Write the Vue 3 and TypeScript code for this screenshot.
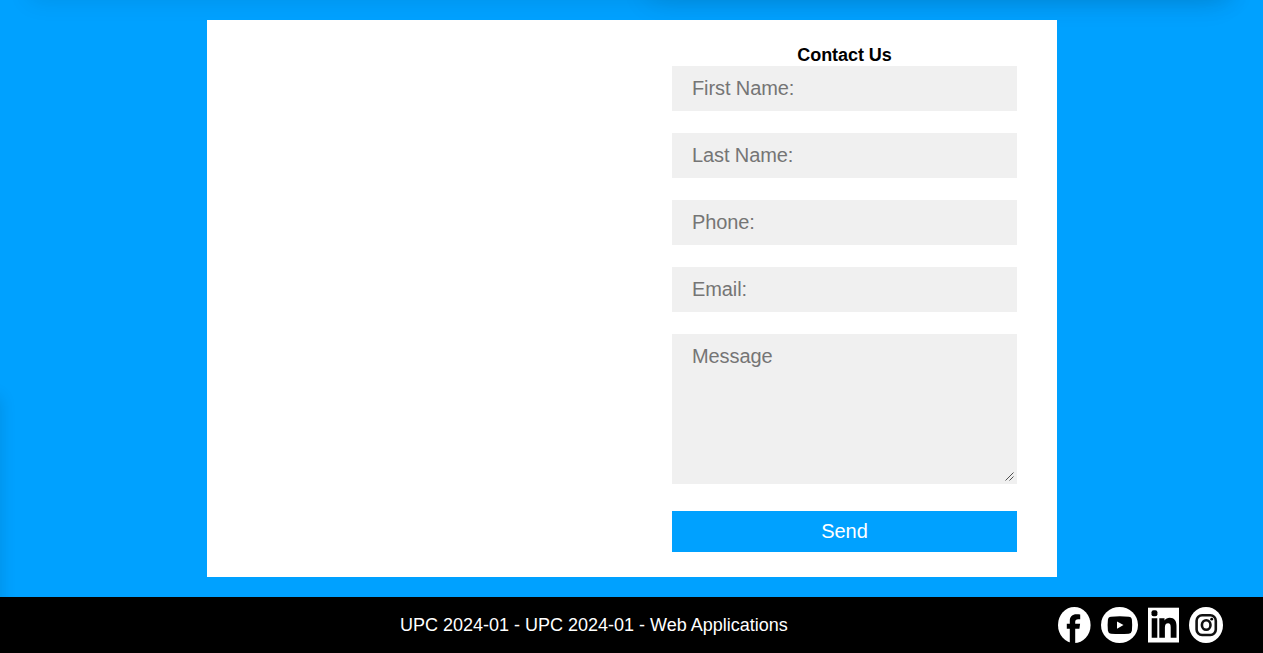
<script setup lang="ts">
interface Field {
  name: string
  label: string
  type: string
}

const fields: Field[] = [
  { name: 'firstName', label: 'First Name:', type: 'text' },
  { name: 'lastName', label: 'Last Name:', type: 'text' },
  { name: 'phone', label: 'Phone:', type: 'tel' },
  { name: 'email', label: 'Email:', type: 'email' },
]
</script>

<template>
  <div class="page">
    <main class="contact">
      <div class="shade shade-top"></div>
      <div class="shade shade-right"></div>
      <div class="shade shade-left"></div>
      <section class="card">
        <form class="form" @submit.prevent>
          <h2>Contact Us</h2>
          <input v-for="f in fields" :key="f.name" :name="f.name" :type="f.type" :placeholder="f.label" />
          <div class="message">
            <textarea name="message" placeholder="Message"></textarea>
            <svg class="grip" width="9" height="9" viewBox="0 0 9 9">
              <path d="M0.500 8.500l8-8M4.500 8.500l4-4" fill="none" stroke="#505050" />
            </svg>
          </div>
          <button type="submit">Send</button>
        </form>
      </section>
    </main>
    <footer>
      <p>UPC 2024-01 - UPC 2024-01 - Web Applications</p>
      <nav class="social">
        <a aria-label="Facebook">
          <svg width="33" height="36" viewBox="0 0 33 36">
            <ellipse cx="16.300" cy="18" rx="16.300" ry="18" fill="#fff" />
            <path d="M11.800 36V21.800H8.800v-5h3v-2.600c0-4.700 2.600-6.900 6.600-6.900 1.500 0 2.800.1 3.800.3v4.600h-2.100c-2 0-2.900.9-2.900 2.500v2.100h4.900l-.7 5h-4.200V36z" />
          </svg>
        </a>
        <a aria-label="YouTube">
          <svg width="37" height="36" viewBox="0 0 37 36">
            <ellipse cx="18.500" cy="18" rx="18.500" ry="18" fill="#fff" />
            <path d="M10 9.700q8.700-.7 17.800 0 2.700.2 3.100 3 .6 5.500 0 11-.4 2.700-3.100 3-9.100.7-17.800 0-2.700-.3-3.100-3-.6-5.500 0-11 .4-2.800 3.100-3z" />
            <path d="M16 14.500v7.200l6.500-3.600z" fill="#fff" />
          </svg>
        </a>
        <a aria-label="LinkedIn">
          <svg width="31" height="36" viewBox="0 0 31 36">
            <rect y="0.700" width="31" height="34.800" fill="#fff" />
            <rect x="3.500" y="3.300" width="5.900" height="5.900" rx="2" />
            <path d="M3.700 11.300h5.600v19.400H3.700zM11.300 11.300h5.200v2.300c1.200-1.800 3-2.800 5.200-2.800 4.700 0 6.800 3 6.800 8v11.900H22.700V20.500c0-2.800-.7-4.200-2.600-4.200-2.200 0-3.200 1.500-3.200 4.200v10.200h-5.600z" />
          </svg>
        </a>
        <a aria-label="Instagram">
          <svg width="34" height="36" viewBox="0 0 34 36">
            <ellipse cx="17" cy="18" rx="17" ry="18" fill="#fff" />
            <g fill="none" stroke="#111" stroke-width="2.600">
              <rect x="7.600" y="8.200" width="19.200" height="19.800" rx="5.500" />
              <ellipse cx="17.200" cy="18" rx="4.300" ry="4.800" />
            </g>
            <circle cx="22.700" cy="12.200" r="1.400" />
          </svg>
        </a>
      </nav>
    </footer>
  </div>
</template>

<style>
body {
  margin: 0;
}
</style>

<style scoped>
.page {
  height: 653px;
  font-family: Arial, "Liberation Sans", sans-serif;
  display: flex;
  flex-direction: column;
}
.contact {
  position: relative;
  height: 597px;
  box-sizing: border-box;
  padding: 20px 0;
  background: #00a1ff;
  overflow: hidden;
}
.shade {
  position: absolute;
}
.shade-top {
  left: 30px;
  right: 30px;
  bottom: 100%;
  height: 60px;
  box-shadow: 0 0 24px rgba(0, 0, 0, 0.1);
}
.shade-right {
  left: 650px;
  right: 40px;
  bottom: 100%;
  height: 60px;
  box-shadow: 0 0 30px rgba(0, 0, 0, 0.13);
}
.shade-left {
  top: 397px;
  bottom: -30px;
  right: 100%;
  width: 60px;
  box-shadow: 0 0 16px rgba(0, 0, 0, 0.12);
}
.card {
  position: relative;
  width: 850px;
  height: 557px;
  margin-left: 207px;
  padding: 25px 40px;
  box-sizing: border-box;
  background: #fff;
  display: flex;
  justify-content: flex-end;
}
.form {
  width: 345px;
  display: flex;
  flex-direction: column;
}
h2 {
  margin: 0;
  font-size: 18px;
  line-height: 21px;
  letter-spacing: -0.05px;
  text-align: center;
}
input,
textarea {
  box-sizing: border-box;
  width: 100%;
  border: 0;
  border-radius: 0;
  background: #f0f0f0;
  font: 20px Arial, "Liberation Sans", sans-serif;
  letter-spacing: -0.1px;
  padding: 10px 20px;
  outline: none;
}
input {
  height: 45px;
  margin: 0 0 22px;
}
.message {
  position: relative;
  height: 150px;
  margin: 0 0 27px;
}
textarea {
  display: block;
  height: 150px;
  padding-top: 11px;
  resize: none;
}
.grip {
  position: absolute;
  right: 3px;
  bottom: 3px;
  pointer-events: none;
}
input::placeholder,
textarea::placeholder {
  color: #757575;
}
button {
  height: 41px;
  border: 0;
  padding: 0;
  background: #00a1ff;
  color: #fff;
  font: 20px Arial, "Liberation Sans", sans-serif;
  letter-spacing: -0.1px;
}
footer {
  height: 56px;
  box-sizing: border-box;
  padding: 0 40px 0 400px;
  display: flex;
  align-items: center;
  justify-content: space-between;
  background: #000;
  color: #fff;
}
footer p {
  margin: 0;
  font-size: 18px;
  white-space: nowrap;
}
.social {
  display: flex;
  align-items: center;
  gap: 10px;
}
.social svg {
  display: block;
}
</style>
